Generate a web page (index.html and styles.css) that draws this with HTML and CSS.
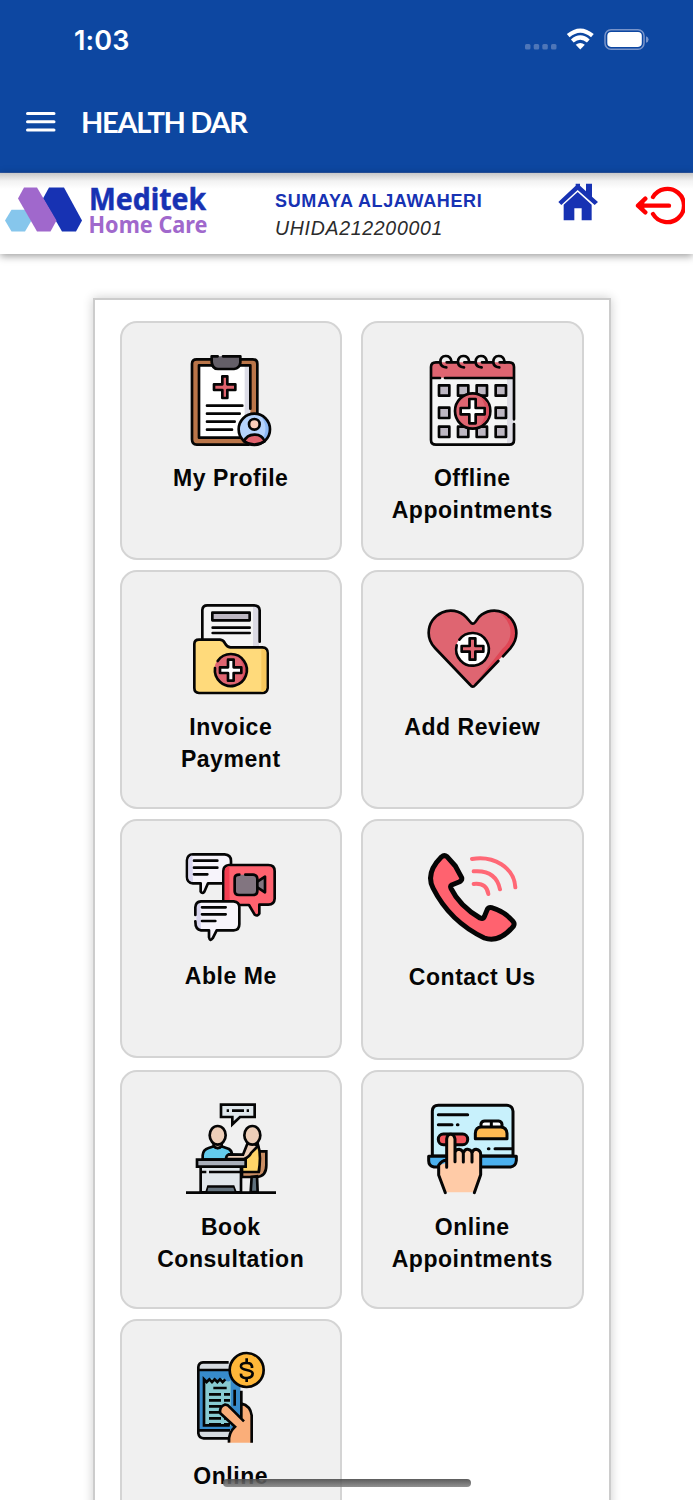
FILE: index.html
```html
<!DOCTYPE html>
<html lang="en">
<head>
<meta charset="utf-8">
<title>Health Dar</title>
<link rel="stylesheet" href="styles.css">
</head>
<body>
<div class="screen">
  <div class="topbar">
    <div class="status">
      <span class="time">1:03</span>
      <svg class="signals" viewBox="0 0 126 24" aria-hidden="true">
        <g fill="#4e76b8"><rect x="1" y="16" width="5.5" height="5.5" rx="1.5"/><rect x="9.7" y="16" width="5.5" height="5.5" rx="1.5"/><rect x="18.3" y="16" width="5.5" height="5.5" rx="1.5"/><rect x="27" y="16" width="5.5" height="5.5" rx="1.5"/></g>
        <g fill="none" stroke="#fff" stroke-width="4.2"><path d="M44.200 7.700Q56.300-2.500 68.400 7.700"/><path d="M48.300 13Q56.300 6.100 64.300 13"/></g>
        <path d="M51.700 16.800Q56.300 13 60.800 16.800L56.300 21.600Z" fill="#fff"/>
        <rect x="81" y="1.700" width="39" height="19.500" rx="6" fill="none" stroke="#7894ca" stroke-width="1.500"/>
        <rect x="83.300" y="3.900" width="34.500" height="15" rx="3.800" fill="#fff"/>
        <path d="M122 8.200Q124.600 9 124.600 11.500T122 14.700Z" fill="#7894ca"/>
      </svg>
    </div>
    <div class="appbar">
      <svg class="menu" viewBox="0 0 30 20"><path d="M1.500 1.500H28M1.500 9.700H28M1.500 17.900H28" stroke="#fff" stroke-width="3" stroke-linecap="round"/></svg>
      <span class="title">HEALTH DAR</span>
    </div>
  </div>
  <header class="patient">
    <svg class="logo" viewBox="0 173 215 80">
      <path d="M11.500 209.700H25L31.500 220.500 25 231.500H11.500L5 220.500Z" fill="#86c6ec"/>
      <path d="M49 187.500H64L82 220.500 76 231.500H62L43 198.500Z" fill="#1732b3"/>
      <path d="M24 187.500H37L56.500 220.500 50.500 231.500H37L18 198.500Z" fill="#a068cc"/>
      <text class="logo-main" x="89" y="210" textLength="117" lengthAdjust="spacingAndGlyphs">Meditek</text>
      <text class="logo-sub" x="88.500" y="232.500" textLength="119" lengthAdjust="spacingAndGlyphs">Home Care</text>
    </svg>
    <div class="identity"><div class="name">SUMAYA ALJAWAHERI</div><div class="uhid">UHIDA212200001</div></div>
    <svg class="home" viewBox="638 549 120 112" fill="#1732b3">
      <path d="M639 605L691 556V550H704V556L722 573V550H740V589L758 605 748 614 697 569 648 614Z"/>
      <path d="M655 613L697 575 739 613V660H709V624H687V660H655Z"/>
    </svg>
    <svg class="logout" viewBox="868 556 150 120" fill="none" stroke="#f00" stroke-width="13" stroke-linecap="round" stroke-linejoin="round">
      <path d="M922 592A50 50 0 1 1 922 643M970 618H879M899 597L877 618 899 638"/>
      <path d="M877 618L896 602V634Z" fill="#f00" stroke="none"/>
    </svg>
  </header>

  <main class="panel">
    <a class="card">
      <svg class="icon" viewBox="18 42 270 270">
        <rect x="36" y="55" width="196" height="256" rx="15" fill="#ba7549"/>
        <path d="M57 73H211V290H57Z" fill="#fff"/><path d="M194 75H210V214L194 225Z" fill="#dcdce7"/>
        <path class="ln" d="M211 203V73H57V290H181M232 217V68Q232 55 218 55H50Q36 55 36 68V295Q36 311 50 311H206"/>
        <path d="M95 46H181V65Q179 84 162 84H113Q97 82 95 65Z" fill="#645f68"/>
        <path class="ln" d="M113 46H95V63Q97 84 114 84H162Q179 82 181 65V46H129"/>
        <path d="M127 106H142V130H166V147H142V171H127V147H102V130H127Z" fill="#e0626d" class="ln"/>
        <path class="ln" d="M81 194H187M81 218H179M81 242H164M81 266H156"/>
        <circle cx="223" cy="265" r="47" fill="#b5d3fc"/><path d="M242 225Q269 259 245 300Q272 290 269 259Q264 235 242 225" fill="#8db8f4"/>
        <path class="ln" d="M192 301Q200 282 223 281T254 301Q223 320 192 301" fill="#e0626d"/><circle class="ln" cx="223" cy="250" r="16" fill="#fbcdb9"/><circle class="ln" cx="223" cy="265" r="47"/>
      </svg><span class="label">My Profile</span>
    </a>
    <a class="card">
      <svg class="icon" viewBox="36 42 270 270">
        <path d="M63 64H283Q297 64 297 78V297Q297 311 283 311H63Q48 311 48 297V78Q48 64 63 64" fill="#f5f5f5"/>
        <path d="M276 110H296V310H276Z" fill="#dedde5"/><path d="M48 110V78Q48 64 63 64H283Q297 64 297 78V110Z" fill="#df6571"/>
        <path class="ln" d="M297 235V78Q297 64 283 64H268M76 64H63Q48 64 48 78V297Q48 311 63 311H283Q297 311 297 297V249M49 111H75M90 111H296"/>
        <g class="ln" fill="#bdb7c2"><rect x="72" y="133" width="31" height="31"/><rect x="129" y="133" width="31" height="31"/><rect x="185" y="133" width="31" height="31"/><rect x="242" y="133" width="31" height="31"/><rect x="72" y="200" width="31" height="31"/><rect x="242" y="200" width="31" height="31"/><rect x="72" y="257" width="31" height="31"/><rect x="129" y="257" width="31" height="31"/><rect x="185" y="257" width="31" height="31"/><rect x="242" y="257" width="31" height="31"/></g>
        <path class="ln" d="M109 59C105 40 77 40 76 62C76 72 83 78 94 79M95 64H129M162 59C158 40 130 40 129 62C129 72 136 78 147 79M148 64H182M215 59C211 40 183 40 182 62C182 72 189 78 200 79M201 64H235M268 59C264 40 236 40 235 62C235 72 242 78 253 79M254 64H270"/>
        <circle class="ln" cx="173" cy="210" r="53" fill="#df6571"/><path d="M197 168Q225 210 197 251Q222 240 222 210T197 168" fill="#d94d5d"/>
        <path class="ln" d="M163 174H182V201H209V220H182V247H163V220H137V201H163Z" fill="#fff"/>
      </svg><span class="label">Offline<br>Appointments</span>
    </a>
    <a class="card">
      <svg class="icon" viewBox="18 27 270 270">
        <path d="M67 135V45Q68 31 82 31H222Q238 31 239 46V155H145Z" fill="#f5f5f5"/><path d="M219 33Q235 37 237 47V154H219Z" fill="#dbdae4"/>
        <path class="ln" d="M67 132V45Q68 31 82 31H222Q238 31 239 46V140M98 98H209M98 114H209"/><rect class="ln" x="97" y="53" width="112" height="23" fill="#bdb7c2"/>
        <path class="ln" d="M43 147Q43 134 57 134H120Q130 135 135 145T151 157H247Q263 158 263 174V279Q261 294 247 294H57Q43 293 43 279Z" fill="#ffda7b"/><path d="M244 162Q262 161 259 178V279Q257 292 244 290Z" fill="#f8c85d"/>
        <circle cx="152" cy="225" r="49" fill="#df6571"/><path d="M178 188Q203 225 178 262Q200 251 200 225T178 188" fill="#d94d5d"/>
        <path class="ln" d="M113 198A48 48 0 1 1 105 219"/>
        <path class="ln" d="M144 194H161V217H184V234H161V257H144V234H120V217H144Z" fill="#fff"/>
      </svg><span class="label">Invoice<br>Payment</span>
    </a>
    <a class="card">
      <svg class="icon" viewBox="36 27 270 270">
        <path d="M173 87L154 67C111 23 41 56 41 114Q41 139 60 159L166 270Q173 280 181 270L286 159C333 107 284 42 228 48Q205 51 192 66Z" fill="#df6571"/>
        <path d="M257 56C298 89 293 137 262 161L191 252 278 168C334 115 294 67 257 56" fill="#df4655"/>
        <path class="ln" d="M250 198L181 270Q173 280 166 270L60 159Q41 139 41 114C41 56 111 23 154 67L166 81Q173 91 181 81L192 66C235 24 304 56 304 115Q304 139 286 160L264 184"/>
        <circle cx="172" cy="162" r="49" fill="#fff"/><path class="ln" d="M133 134A49 49 0 1 1 125 151"/>
        <path class="ln" d="M164 130H181V153H205V170H181V194H164V170H140V153H164Z" fill="#df6571"/>
      </svg><span class="label">Add Review</span>
    </a>
    <a class="card">
      <svg class="icon" viewBox="33 27 270 270">
        <path class="ln" d="M54 31H149Q168 32 168 51V101Q168 118 149 118H99L88 143Q82 151 77 143V118H54Q36 116 36 99V49Q37 32 54 31" fill="#f7f4fb"/><path d="M52 34Q40 38 40 51V99Q40 113 54 114Z" fill="#d8d5ef"/>
        <path class="ln" d="M57 50H127M57 71H127M57 91H97"/>
        <path class="ln" d="M162 63H280Q299 63 299 81V164Q298 182 280 182H253V209Q248 218 239 212L222 183H145V81Q145 65 162 63" fill="#ff626f"/><path d="M163 67Q149 69 149 83V179H164Z" fill="#f43e52"/>
        <path class="ln" d="M247 113L270 98V145L247 130" fill="#827580"/><rect x="179" y="92" width="68" height="61" rx="10" fill="#827580"/><path class="ln" d="M193 92Q179 92 179 103V142Q179 153 192 153H234Q247 153 247 141V104Q246 92 234 92H211"/>
        <path d="M78 172H176Q193 174 193 189V241Q193 259 176 259H125L113 283Q105 294 102 280V259H78Q61 258 61 241V190Q62 173 78 172" fill="#f7f4fb"/><path d="M76 175Q65 177 64 193V239Q64 255 78 256Z" fill="#d8d5ef"/>
        <path class="ln" d="M61 213V190Q62 173 78 172H176Q193 174 193 189V241Q193 259 176 259H125L113 283Q105 294 102 280V259H78Q61 258 61 232M81 190H152M81 211H152M81 231H121"/>
      </svg><span class="label">Able Me</span>
    </a>
    <a class="card tall">
      <svg class="icon" viewBox="36 27 270 270">
        <path d="M79 39Q88 31 96 38L121 66 140 101Q142 109 132 114L110 123Q105 126 108 133Q133 185 195 222Q204 226 208 218L217 196Q221 189 230 191Q268 202 294 232Q300 239 295 247Q252 298 208 282Q104 232 54 132Q31 87 79 39Z" fill="#ff626f" stroke="#050505" stroke-width="15" stroke-linejoin="round"/>
        <path d="M171 45C235 34 298 70 301 130M176 82Q243 77 255 136M176 120Q215 116 220 150" fill="none" stroke="#ff6876" stroke-width="12" stroke-linecap="round"/>
      </svg><span class="label">Contact Us</span>
    </a>
    <a class="card">
      <svg class="icon sharp" viewBox="33 27 270 270">
        <path d="M138 29H239V66H195L172 88V66H138Z" fill="#dfe7ec" class="ln"/><path class="ln" d="M155 47H162M171 47H207M215 47H222"/>
        <path class="ln" d="M201 246H247Q274 243 274 211V169H252V226H201Z" fill="#ca8e64"/><path class="ln" d="M230 246L227 291H248L246 244Z" fill="#60717d"/>
        <path class="ln" d="M83 194V181Q84 164 101 159L117 154Q128 163 139 154L162 162Q170 167 171 178L157 184V194Z" fill="#63cbec"/>
        <path class="ln" d="M116 143V154Q128 165 140 154V143" fill="#edceb8"/><ellipse class="ln" cx="128" cy="121" rx="24" ry="28" fill="#edceb8"/>
        <path class="ln" d="M248 145Q260 179 251 231H201V205Z" fill="#ffd568"/><path class="ln" d="M218 144L204 179 161 178Q153 182 153 192H207Q222 187 229 173L248 154 232 141" fill="#edceb8"/><ellipse class="ln" cx="232" cy="121" rx="24" ry="28" fill="#edceb8"/>
        <path class="ln" d="M77 214H198V292H77Z" fill="#e1e7eb"/><path class="ln" d="M66 194H212V215H66Z" fill="#a9afba"/><path class="ln" d="M78 231H94M102 231H197M95 291L100 275H175L181 291" fill="none"/><path d="M100 278H175L179 290H97Z" fill="#64737e"/><path class="ln" d="M33 293H303"/>
      </svg><span class="label">Book<br>Consultation</span>
    </a>
    <a class="card">
      <svg class="icon bold" viewBox="36 27 270 270">
        <path class="ln" d="M52 183V48Q53 31 70 31H275Q293 32 294 49V183Z" fill="#c8f1fc"/>
        <path class="ln" d="M41 184H304V197Q302 214 287 216H57Q41 212 41 197Z" fill="#4bb0ee"/>
        <path class="ln" d="M70 59H158M70 89H111M127 89H129M220 161H222M240 161H290"/>
        <path class="ln" d="M198 94V86Q200 78 209 78H251Q260 79 261 88V97M229 80V94" fill="#fff"/><path class="ln" d="M181 131V115Q182 96 199 96H258Q275 98 276 115V131Z" fill="#ffba52"/>
        <rect class="ln" x="70" y="117" width="88" height="32" rx="15" fill="#f2545b"/>
        <path d="M94 292L71 240V211L95 203V132Q97 118 107 118T120 132V170L132 163 148 170 158 163 171 170 183 163Q196 165 197 178V239L178 292Z" fill="#ffcba7"/>
        <path class="ln" d="M91 293L71 240V211Q80 196 95 195M95 217V132Q97 118 107 118T120 132V200M120 172Q123 163 132 163Q145 166 145 177V201M145 174Q149 162 158 163Q171 165 171 177V201M171 174Q174 163 183 163Q197 166 197 178V239L178 293"/>
      </svg><span class="label">Online<br>Appointments</span>
    </a>
    <a class="card">
      <svg class="icon sharp" viewBox="33 27 270 270">
        <path d="M84 55H197V283H84Q70 281 70 268V67Q72 55 84 55" fill="#d5dbe0"/><path d="M73 80H196V258H73Z" fill="#378bcb"/>
        <path class="ln" d="M161 55H84Q71 56 70 69V268Q72 282 86 283H166M73 78H164M71 259H165M199 140V185"/>
        <path d="M88 108Q96 117 103 108T119 108 135 108 151 108 167 108V245H88Z" fill="#88cbd2"/><path class="ln" d="M87 243V106L95 114 103 106 111 114 119 106 127 114 135 106 143 114 151 106M179 137V185M83 244H164"/>
        <path class="ln" d="M115 132H155M102 151H138M147 151H165M102 169H138M147 169H165M102 187H138M102 205H138M102 223H138M147 223H165M102 241H138M147 241H165"/>
        <path d="M160 296Q160 267 180 248L136 208Q132 187 149 182Q158 181 165 190L199 222V179Q226 185 230 214V296Z" fill="#faae79"/><path class="ln" d="M162 296Q159 267 180 248L136 208Q132 187 149 182Q158 181 165 190L207 232M199 225V179Q226 185 230 214V296"/>
        <circle class="ln" cx="215" cy="78" r="51" fill="#ffb739"/><path class="ln" d="M231 72V67Q229 57 217 57H211Q197 58 198 68Q199 75 215 78Q232 81 233 88Q233 101 217 102H209Q197 100 198 89M215 43V57M215 102V114"/>
      </svg><span class="label">Online</span>
    </a>
  </main>
  <div class="home-indicator"></div>
</div>
</body>
</html>
```
FILE: styles.css
```css
* { box-sizing: border-box; }
body { margin: 0; background: #fff; font-family: "Liberation Sans", Arial, sans-serif; }
.screen { position: relative; width: 693px; height: 1500px; overflow: hidden; }
.topbar { height: 173px; background: #0d47a1; border-bottom: 1px solid #2a57a6; color: #fff; }
.status { display: flex; justify-content: space-between; padding: 23px 44px 0 74px; height: 91px; }
.time { font: 600 27px/35px Inter, sans-serif; letter-spacing: .1px; }
.signals { width: 126px; height: 24px; margin: 5px -.5px 0 0; }
.appbar { display: flex; align-items: center; padding: 0 26px; height: 62px; gap: 25px; }
.menu { width: 30px; height: 20px; }
.title { font: 700 29px/40px Lato, sans-serif; letter-spacing: -1.3px; }
.patient { display: flex; height: 81px; background: linear-gradient(#c8c8c8, #f2f2f2 8px, #fff 16px); box-shadow: 0 2px 8px rgba(0,0,0,.4); }
.logo { width: 215px; height: 80px; flex: none; }
.logo-main { font: 700 30px "Noto Sans", sans-serif; fill: #1732b3; stroke: #1732b3; stroke-width: .5px; }
.logo-sub { font: 700 23px "Noto Sans", sans-serif; fill: #a068cc; }
.identity { width: 284px; padding: 17px 0 0 60px; white-space: nowrap; }
.name { font-size: 18px; line-height: 22px; font-weight: 700; color: #1732b3; letter-spacing: .65px; }
.uhid { font-size: 19.5px; line-height: 24px; margin-top: 4px; font-style: italic; color: #2b2b2b; letter-spacing: .7px; }
.home { width: 40px; height: 38px; margin: 10px 0 0 59px; flex: none; }
.logout { width: 50px; height: 40px; margin: 12px 0 0 37px; flex: none; }
.panel { display: grid; grid-template-columns: 222.5px 222.5px; column-gap: 19px; row-gap: 10.25px; align-items: start; align-content: start; width: 518px; height: 1240px; margin: 44px 0 0 93px; padding: 20.5px 24.5px; border: 2px solid #ccc; box-shadow: 0 0 10px rgba(0,0,0,.2); background: #fff; }
.card { display: flex; flex-direction: column; align-items: center; height: 239px; padding-top: 32px; border: 2px solid #d4d4d4; border-radius: 17px; background: #f0f0f0; }
.tall { height: 240.5px; }
.icon { width: 90px; height: 90px; overflow: visible; fill: none; }
.icon .ln { stroke: #050505; stroke-width: 8; stroke-linecap: round; stroke-linejoin: round; }
.sharp .ln { stroke-linecap: butt; stroke-linejoin: miter; }
.bold .ln { stroke-width: 9; }
.label { margin-top: 17px; font-size: 23px; line-height: 32.4px; font-weight: 700; color: #050505; letter-spacing: .55px; text-align: center; }
.tall .label { margin-top: 18px; }
.home-indicator { position: absolute; left: 223px; top: 1479px; width: 248px; height: 8px; border-radius: 4px; background: linear-gradient(rgba(75,75,75,.9), rgba(125,125,125,.85)); }
```
